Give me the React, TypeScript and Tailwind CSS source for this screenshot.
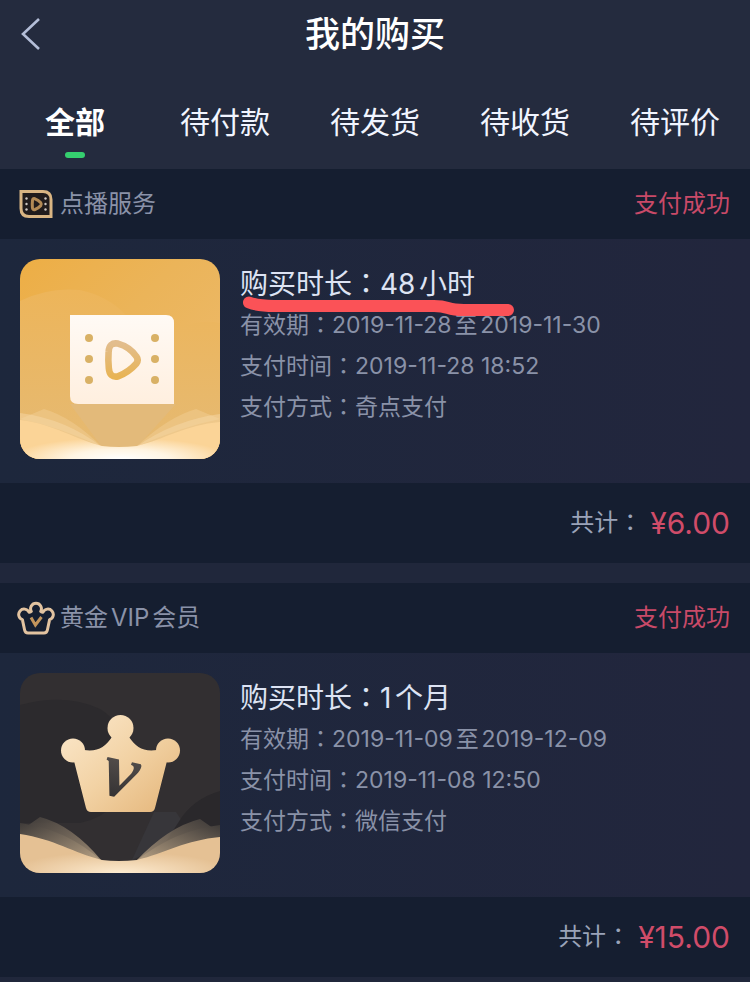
import { useState } from "react";
import type { ReactNode } from "react";

type Order = {
    id: string;
    name: string;
    icon: ReactNode;
    cover: ReactNode;
    status: string;
    duration: string;
    details: { label: string; value: string }[];
    total: string;
    marked?: boolean;
};

const tabs = ["全部", "待付款", "待发货", "待收货", "待评价"];

function FilmIcon() {
    return (
        <svg width="34" height="30" viewBox="0 0 34 30" fill="none" aria-hidden="true">
            <path d="M2 2.5H24Q32 2.5 32 10.5V27.5H10Q2 27.5 2 19.5Z" fill="#211c1c" stroke="#d9b583" strokeWidth="3" />
            <path
                d="M13.5 11.5Q13.5 9 16 9.8Q19.5 11.2 21.8 13.8Q22.8 15.2 21.8 16.6Q19.5 19 16 20.5Q13.5 21.3 13.4 18.5Q13.1 15 13.5 11.5Z"
                stroke="#b38a55"
                strokeWidth="3"
            />
            <g fill="#cfc8c4">
                <circle cx="7.5" cy="9.5" r="1.2" />
                <circle cx="7.5" cy="15" r="1.2" />
                <circle cx="7.5" cy="20.5" r="1.2" />
                <circle cx="26.5" cy="9.5" r="1.2" />
                <circle cx="26.5" cy="15" r="1.2" />
                <circle cx="26.5" cy="20.5" r="1.2" />
            </g>
        </svg>
    );
}

function CrownIcon() {
    return (
        <svg width="38" height="34" viewBox="0 0 38 34" fill="none" aria-hidden="true">
            <path
                d="M14.3 10.4A5.4 5.4 0 1 1 23.7 10.4Q24.5 11.5 26 11.2A5.4 5.4 0 1 1 32.6 18.6L30.4 29Q29.8 32 27 32H11Q8.2 32 7.6 29L5.4 18.6A5.4 5.4 0 1 1 12 11.2Q13.5 11.5 14.3 10.4Z"
                stroke="#e2c3a0"
                strokeWidth="3"
                strokeLinejoin="round"
            />
            <path d="M14 16.5L18.4 24L24.5 16" stroke="#c2945c" strokeWidth="3" />
        </svg>
    );
}

function FilmCover() {
    return (
        <svg viewBox="0 0 200 200" className="size-full" aria-hidden="true">
            <defs>
                <linearGradient id="film-bg" x1="0" y1="0" x2="1" y2="1">
                    <stop offset="0" stopColor="#edae45" />
                    <stop offset="0.4" stopColor="#ebb459" />
                    <stop offset="1" stopColor="#edbb6f" />
                </linearGradient>
                <linearGradient id="film-hill" x1="0" y1="0" x2="0" y2="1">
                    <stop offset="0" stopColor="#edb55a" />
                    <stop offset="1" stopColor="#e5ba74" />
                </linearGradient>
                <radialGradient id="film-glow" cx="0.5" cy="1" r="0.55">
                    <stop offset="0" stopColor="#ffffff" />
                    <stop offset="0.45" stopColor="#fff5e3" />
                    <stop offset="1" stopColor="#fbd497" />
                </radialGradient>
                <linearGradient id="film-plate" x1="0" y1="0" x2="0" y2="1">
                    <stop offset="0" stopColor="#fffaf5" />
                    <stop offset="1" stopColor="#ffefdf" />
                </linearGradient>
                <linearGradient id="film-play" x1="0" y1="0" x2="0" y2="1">
                    <stop offset="0" stopColor="#e2bd8d" />
                    <stop offset="1" stopColor="#e8b455" />
                </linearGradient>
            </defs>
            <rect width="200" height="200" fill="url(#film-bg)" />
            <path d="M0 42Q28 28 60 31Q88 37 106 56Q130 78 160 68Q182 60 200 64V200H0Z" fill="url(#film-hill)" />
            <path d="M50 145L82 188H117L156 145Z" fill="#e3ba7a" />
            <path d="M24 150Q52 158 82 188Q40 168 0 160Z" fill="#f5d6a4" opacity="0.35" />
            <path d="M0 154Q46 160 82 188L0 164Z" fill="#f8dcae" opacity="0.45" />
            <path d="M176 150Q148 158 116 188Q160 168 200 160Z" fill="#f5d6a4" opacity="0.35" />
            <path d="M200 155Q154 161 116 188L200 166Z" fill="#f8dcae" opacity="0.45" />
            <path d="M0 161C34 165 54 180 82 187Q98 189 117 187C145 180 166 166 200 163V200H0Z" fill="url(#film-glow)" />
            <path d="M50 56H146Q154 56 154 64V145H58Q50 145 50 137Z" fill="url(#film-plate)" />
            <g fill="#d9b165">
                <circle cx="69" cy="79" r="4" />
                <circle cx="69" cy="100" r="4" />
                <circle cx="69" cy="121" r="4" />
                <circle cx="135" cy="79" r="4" />
                <circle cx="135" cy="100" r="4" />
                <circle cx="135" cy="121" r="4" />
            </g>
            <path
                d="M88.6 93Q89 83 98 84.6Q110 88 116.4 97.5Q119 101 116.4 104.5Q109 113 98 117.4Q89.5 119 88.8 109Q88 101 88.6 93Z"
                fill="none"
                stroke="url(#film-play)"
                strokeWidth="6.6"
            />
        </svg>
    );
}

function CrownCover() {
    return (
        <svg viewBox="0 0 200 200" className="size-full" aria-hidden="true">
            <defs>
                <linearGradient id="vip-gold" gradientUnits="userSpaceOnUse" x1="60" y1="45" x2="140" y2="140">
                    <stop offset="0" stopColor="#fae5c6" />
                    <stop offset="0.5" stopColor="#f2d2a4" />
                    <stop offset="1" stopColor="#e6b97f" />
                </linearGradient>
                <radialGradient id="vip-glow" cx="0.5" cy="1" r="0.55">
                    <stop offset="0" stopColor="#fdebd0" />
                    <stop offset="1" stopColor="#e5c194" />
                </radialGradient>
                <linearGradient id="vip-left" x1="0" y1="0" x2="1" y2="1">
                    <stop offset="0" stopColor="#3f3b39" />
                    <stop offset="1" stopColor="#b7a184" />
                </linearGradient>
                <linearGradient id="vip-right" x1="1" y1="0" x2="0" y2="1">
                    <stop offset="0" stopColor="#3f3b39" />
                    <stop offset="1" stopColor="#b7a184" />
                </linearGradient>
                <linearGradient id="vip-letter" x1="0" y1="0" x2="0" y2="1">
                    <stop offset="0" stopColor="#6a625d" />
                    <stop offset="1" stopColor="#29282a" />
                </linearGradient>
            </defs>
            <rect width="200" height="200" fill="#322f31" />
            <path d="M0 32Q45 20 80 36Q104 50 110 90Q106 140 60 150H0Z" fill="#2c2a2d" />
            <path d="M134 139L112 187L170 160L156 139Z" fill="#37363a" />
            <path d="M200 118Q172 126 158 150L145 170H200Z" fill="#2a282b" />
            <path d="M20 144Q52 152 82 188Q50 166 0 158Z" fill="url(#vip-left)" opacity="0.8" />
            <path d="M0 150Q46 156 82 188L0 166Z" fill="url(#vip-left)" />
            <path d="M180 146Q148 154 116 188Q150 168 200 160Z" fill="url(#vip-right)" opacity="0.8" />
            <path d="M200 152Q155 157 116 188L200 168Z" fill="url(#vip-right)" />
            <path d="M0 161C34 166 54 180 82 187Q98 189 117 187C145 180 166 167 200 164V200H0Z" fill="url(#vip-glow)" />
            <g fill="url(#vip-gold)">
                <path d="M54 88L66 135Q67 139 71 139H130Q134 139 135 135L147 88L151 77H137C123 79 116 74 109 64H92C85 74 78 79 64 77H50Z" />
                <circle cx="100.5" cy="55" r="13" />
                <circle cx="53" cy="77.5" r="12" />
                <circle cx="148" cy="77.5" r="12" />
            </g>
            <text
                x="82"
                y="124"
                transform="rotate(12 100 106)"
                fontSize="80"
                fontWeight="700"
                fontStyle="italic"
                fontFamily="Liberation Serif, serif"
                fill="url(#vip-letter)"
            >
                v
            </text>
        </svg>
    );
}

const orders: Order[] = [
    {
        id: "film",
        name: "点播服务",
        icon: <FilmIcon />,
        cover: <FilmCover />,
        status: "支付成功",
        duration: "48小时",
        details: [
            { label: "有效期", value: "2019-11-28至2019-11-30" },
            { label: "支付时间", value: "2019-11-28 18:52" },
            { label: "支付方式", value: "奇点支付" },
        ],
        total: "¥6.00",
        marked: true,
    },
    {
        id: "vip",
        name: "黄金VIP会员",
        icon: <CrownIcon />,
        cover: <CrownCover />,
        status: "支付成功",
        duration: "1个月",
        details: [
            { label: "有效期", value: "2019-11-09至2019-12-09" },
            { label: "支付时间", value: "2019-11-08 12:50" },
            { label: "支付方式", value: "微信支付" },
        ],
        total: "¥15.00",
    },
];

// The TC face centres the full-width colon in its box
function Colon() {
    return <span className="leading-none font-['Noto_Sans_CJK_TC',sans-serif]">：</span>;
}

function OrderCard({ order }: { order: Order }) {
    return (
        <article>
            {/* Service name and status */}
            <header className="flex h-[70px] items-center justify-between bg-[#151e30] pl-4 pr-5 text-2xl">
                <h2 className="flex items-center gap-1 text-[#8a92a8]">
                    <span className="flex w-10 justify-center">{order.icon}</span>
                    {order.name}
                </h2>
                <span className="text-[#c94a68]">{order.status}</span>
            </header>

            {/* Details */}
            <div className="flex gap-5 bg-linear-to-r from-[#1d273c] to-[#22263d] px-5 pt-5 pb-6">
                <div className="size-[200px] shrink-0 overflow-hidden rounded-[20px]">{order.cover}</div>
                <div className="relative flex-1 pt-1">
                    <h3 className="text-[28px] leading-[42px] text-[#dde3f3]">
                        购买时长
                        <Colon />
                        {order.duration}
                    </h3>
                    {order.details.map((d) => (
                        <p key={d.label} className="text-[23px] leading-[41px] text-[#8a92a8]">
                            {d.label}
                            <Colon />
                            {d.value}
                        </p>
                    ))}
                    {order.marked && (
                        <svg
                            className="pointer-events-none absolute top-9 left-0"
                            width="280"
                            height="24"
                            viewBox="0 0 280 24"
                            fill="none"
                            aria-hidden="true"
                        >
                            <path
                                d="M9 7.5Q18 11 34 11H194Q202 11 208 13Q214 15 224 15H268"
                                stroke="#fb5257"
                                strokeWidth="12"
                                strokeLinecap="round"
                                strokeLinejoin="round"
                            />
                        </svg>
                    )}
                </div>
            </div>

            {/* Total */}
            <footer className="flex h-20 items-center justify-end gap-2 bg-[#151e30] px-5">
                <span className="text-2xl text-[#9aa3b9]">
                    共计
                    <Colon />
                </span>
                <span className="text-3xl text-[#d04c69]">{order.total}</span>
            </footer>
        </article>
    );
}

export default function App() {
    const [active, setActive] = useState(tabs[0]);

    return (
        <div className="min-h-screen bg-[#20273b] font-[Inter,'Noto_Sans_CJK_SC',sans-serif] [text-autospace:normal]">
            <div className="bg-[#242b3e]">
                <header className="grid h-[68px] grid-cols-[1fr_auto_1fr] items-center px-5">
                    <button type="button" aria-label="返回" className="justify-self-start">
                        <svg width="22" height="34" viewBox="0 0 22 34" fill="none" aria-hidden="true">
                            <path d="M19 2L3 17L19 32" stroke="#b4bed8" strokeWidth="2.6" />
                        </svg>
                    </button>
                    <h1 className="text-[35px] leading-none font-medium text-white">我的购买</h1>
                </header>

                <nav className="grid grid-cols-5 pt-8 pb-[11px]">
                    {tabs.map((tab) => (
                        <button
                            key={tab}
                            type="button"
                            onClick={() => setActive(tab)}
                            className={`flex flex-col items-center text-3xl ${
                                tab === active ? "font-bold text-white" : "text-[#f1f5ff]"
                            }`}
                        >
                            <span className="h-[52px] leading-[44px]">{tab}</span>
                            {tab === active && <span className="h-1.5 w-5 rounded-full bg-[#35cf6f]" />}
                        </button>
                    ))}
                </nav>
            </div>

            <main className="flex flex-col gap-5">
                {orders.map((order) => (
                    <OrderCard key={order.id} order={order} />
                ))}
            </main>
        </div>
    );
}
